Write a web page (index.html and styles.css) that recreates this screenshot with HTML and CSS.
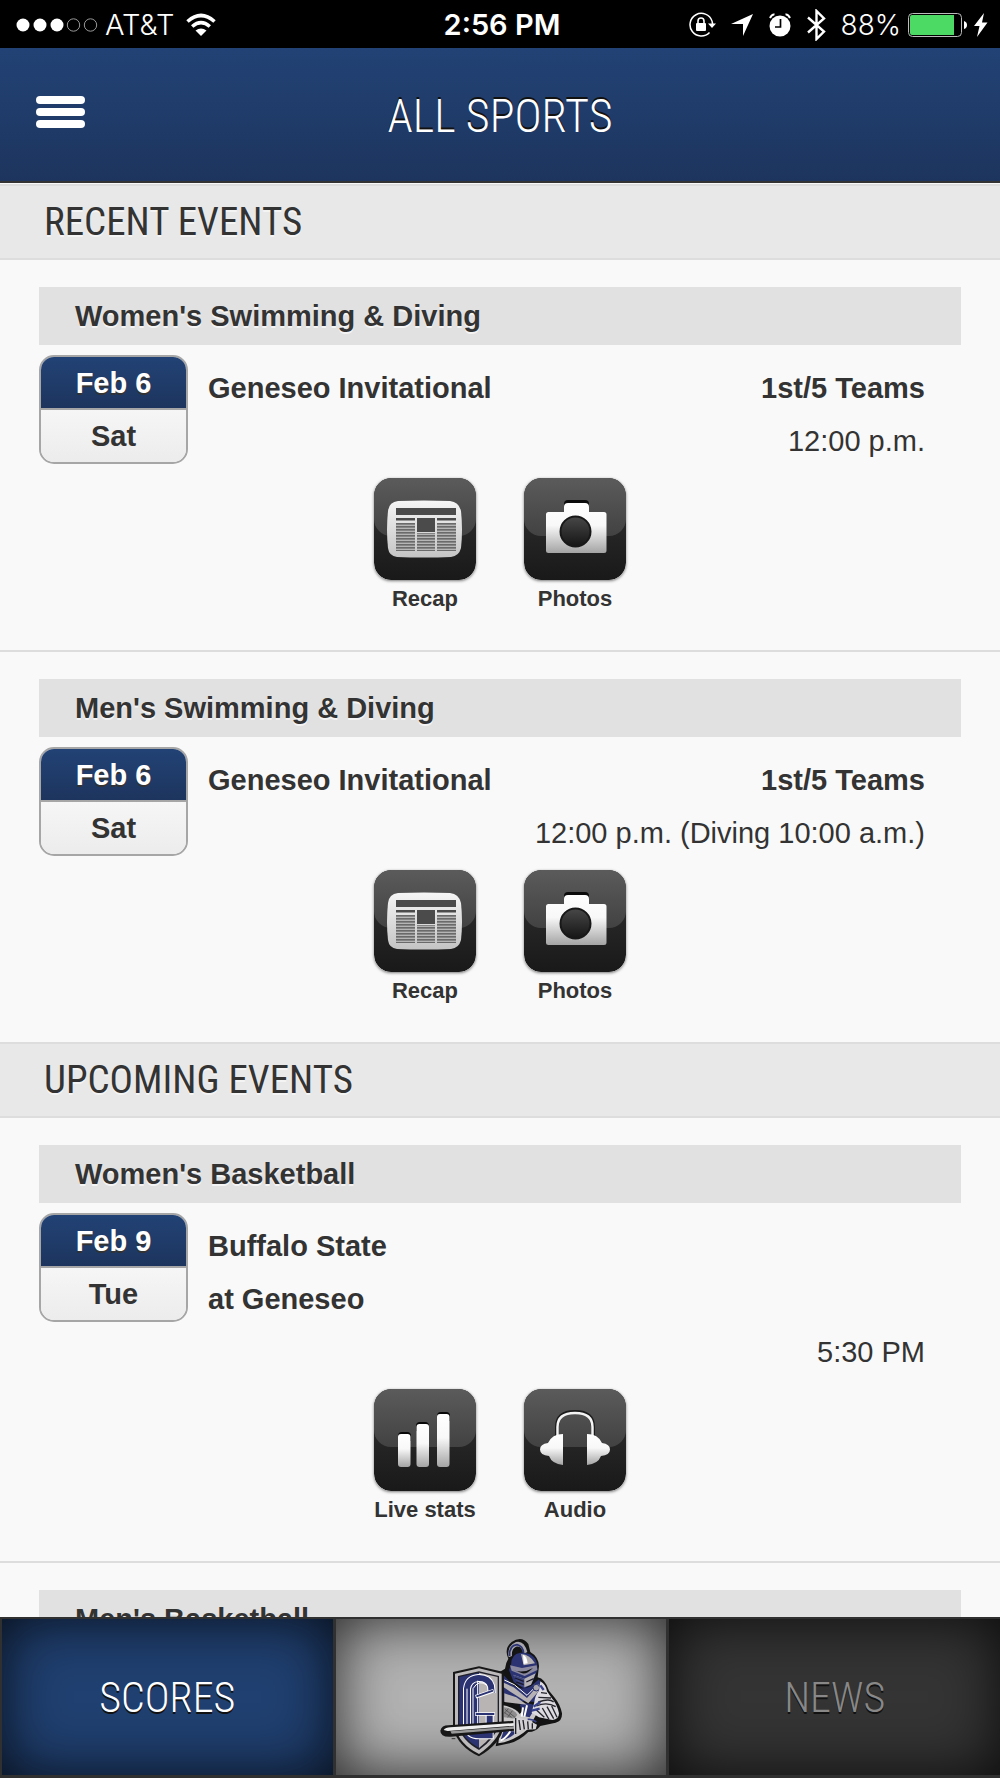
FILE: index.html
```html
<!DOCTYPE html>
<html lang="en">
<head>
<meta charset="utf-8">
<meta name="viewport" content="width=device-width, initial-scale=1">
<title>All Sports</title>
<link rel="stylesheet" href="styles.css">
</head>
<body>
<svg class="defs" width="0" height="0" aria-hidden="true">
  <defs>
    <linearGradient id="tile" x1="0" y1="0" x2="0" y2="1"><stop offset="0" stop-color="#333"/><stop offset="1" stop-color="#191919"/></linearGradient>
    <linearGradient id="gloss" x1="0" y1="0" x2="0" y2="1"><stop offset="0" stop-color="#5b5b5b"/><stop offset="1" stop-color="#424242"/></linearGradient>
    <linearGradient id="metal" x1="0" y1="0" x2="0" y2="1"><stop offset="0" stop-color="#fff"/><stop offset=".45" stop-color="#f8f8f8"/><stop offset="1" stop-color="#a4a4a4"/></linearGradient>
    <linearGradient id="paper" x1="0" y1="0" x2="0" y2="1"><stop offset="0" stop-color="#f6f6f6"/><stop offset="1" stop-color="#c4c4c4"/></linearGradient>
    <linearGradient id="lens" x1="0" y1="0" x2="0" y2="1"><stop offset="0" stop-color="#484848"/><stop offset="1" stop-color="#151515"/></linearGradient>
    <pattern id="lines" width="19" height="3" patternUnits="userSpaceOnUse"><path d="M0 .8h19" stroke="#6a6a6a" stroke-width="1.7"/></pattern>
    <symbol id="tile-base" viewBox="0 0 102 102">
      <rect width="102" height="102" rx="17" fill="url(#tile)"/>
      <path d="M0 17A17 17 0 0 1 17 0h68a17 17 0 0 1 17 17v24a17 17 0 0 1-17 17H17A17 17 0 0 1 0 41z" fill="url(#gloss)"/>
    </symbol>
    <symbol id="recap" viewBox="0 0 102 102">
      <use href="#tile-base"/>
      <path d="M24 23q26-1 52 0 9 1 11 10 2 19 0 37-2 8-10 9-27 1-54 0-8-1-9-9-2-18 0-37 1-9 10-10z" fill="url(#paper)"/>
      <path d="M22 30h60v7H22zM22 40h19v2.500H22zM63 40h19v2.500H63zM43 40h18v14H43z" fill="#4b4b4b"/>
      <path d="M22 45h19v28H22zM63 45h19v28H63zM43 55h18v18H43z" fill="#b5b5b5"/>
      <path d="M22 45h19v28H22zM63 45h19v28H63zM43 55h18v18H43z" fill="url(#lines)"/>
    </symbol>
    <symbol id="photos" viewBox="0 0 102 102">
      <use href="#tile-base"/>
      <path d="M40 26q0-4 4-4h17q4 0 4 4v5H40z" fill="#0b0b0b"/>
      <path d="M40 34v-5q0-4 4-4h17q4 0 4 4v5h15q2.500 0 2.500 2.500v36Q82.500 75 80 75H24.500Q22 75 22 72.500v-36Q22 34 24.500 34z" fill="url(#metal)"/>
      <circle cx="51.500" cy="53.500" r="15" fill="url(#lens)" stroke="#181818" stroke-width="2"/>
    </symbol>
    <symbol id="stats" viewBox="0 0 102 102">
      <use href="#tile-base"/>
      <path d="M24 52v-5q0-4 4-4h5q4 0 4 4v5zM42 42v-5q0-4 4-4h5q4 0 4 4v5zM63 32v-5q0-4 4-4h5q4 0 4 4v5z" fill="#070707"/>
      <rect x="24" y="45" width="12.500" height="33" rx="3" fill="url(#metal)"/>
      <rect x="42.500" y="35" width="12.500" height="43" rx="3" fill="url(#metal)"/>
      <rect x="63" y="25" width="12.500" height="53" rx="3" fill="url(#metal)"/>
    </symbol>
    <symbol id="audio" viewBox="0 0 102 102">
      <use href="#tile-base"/>
      <path d="M33 47V38q0-15 18-15t18 15v9" fill="none" stroke="#1c1c1c" stroke-width="4"/>
      <path d="M33.500 48V38q0-14 17.500-14t17.500 14v10" fill="none" stroke="#f4f4f4" stroke-width="2.500"/>
      <path d="M39 45v31q-11-1-14-9-9-1-9-6.500T24 54q4-9 15-9zM63 45v31q11-1 14-9 9-1 9-6.500T78 54q-4-9-15-9z" fill="url(#metal)"/>
    </symbol>
  </defs>
</svg>

<div class="app">
  <div class="status">
    <div class="status-side">
      <svg width="82" height="16" viewBox="0 0 82 16" aria-hidden="true"><g fill="#fff"><circle cx="7" cy="8" r="6.500"/><circle cx="24" cy="8" r="6.500"/><circle cx="41" cy="8" r="6.500"/></g><g fill="none" stroke="#999" stroke-width="1"><circle cx="57.500" cy="8" r="6.200"/><circle cx="74.500" cy="8" r="6.200"/></g></svg>
      <span class="carrier">AT&amp;T</span>
      <svg class="wifi" width="30" height="24" viewBox="0 0 30 24" aria-hidden="true"><g fill="none" stroke="#fff" stroke-width="3.600"><path d="M1.500 8.500Q15-3.500 28.500 8.500"/><path d="M6.200 13.500q8.800-7.600 17.600 0"/></g><path d="M9.500 17.500q5.500-4 11 0L15 23z" fill="#fff"/></svg>
    </div>
    <span class="clock">2:56 PM</span>
    <div class="status-side status-end">
      <svg width="28" height="26" viewBox="0 0 28 26" aria-hidden="true"><path d="M24 9A11.300 11.300 0 1 0 21.500 20.500" fill="none" stroke="#fff" stroke-width="1.500"/><path d="M20 11.500h8L24 16z" fill="#fff"/><path d="M24 9l.8 4" stroke="#fff" stroke-width="1.500"/><rect x="8" y="11" width="10" height="8" rx="1" fill="#fff"/><path d="M10 11V9a3 3 0 0 1 6 0v2" fill="none" stroke="#fff" stroke-width="1.600"/></svg>
      <svg width="22" height="22" viewBox="0 0 22 22" aria-hidden="true"><path d="M22 0 12 22V10H0z" fill="#fff"/></svg>
      <svg width="24" height="24" viewBox="0 0 24 24" aria-hidden="true"><circle cx="12" cy="13" r="10.500" fill="#fff"/><path d="M2 5q2-4 4.500-3.500M22 5q-2-4-4.500-3.500" fill="none" stroke="#fff" stroke-width="2"/><path d="M12.500 6v8H7" fill="none" stroke="#000" stroke-width="1.700"/></svg>
      <svg width="19" height="32" viewBox="0 0 19 32" aria-hidden="true"><path d="M1 8.500 17 22.500 9.500 30V2L17 9.500 1 23.500" fill="none" stroke="#fff" stroke-width="2.400"/></svg>
      <span class="percent">88%</span>
      <svg width="60" height="24" viewBox="0 0 60 24" aria-hidden="true"><rect x=".5" y=".5" width="53" height="23" rx="4" fill="none" stroke="#bbb"/><path d="M4 2h42v20H4a2 2 0 0 1-2-2V4a2 2 0 0 1 2-2z" fill="#4cd964"/><path d="M56 8q3 1 3 4t-3 4z" fill="#fff"/></svg>
      <svg width="14" height="24" viewBox="0 0 14 24" aria-hidden="true"><path d="M10 0 0 13h5.500L3 24 13.500 9.500H8z" fill="#fff"/></svg>
    </div>
  </div>

  <header class="header">
    <button class="menu" type="button" aria-label="Menu"><span></span><span></span><span></span></button>
    <h1>ALL SPORTS</h1>
  </header>

  <main class="feed">
    <h2>RECENT EVENTS</h2>
    <article class="event">
      <h3>Women's Swimming &amp; Diving</h3>
      <div class="body">
        <div class="date"><span class="day">Feb 6</span><span class="weekday">Sat</span></div>
        <div class="info"><p class="row"><b>Geneseo Invitational</b><b>1st/5 Teams</b></p><p class="time">12:00 p.m.</p></div>
      </div>
      <div class="actions">
        <a href="#"><svg class="tile" viewBox="0 0 102 102"><use href="#recap"/></svg>Recap</a>
        <a href="#"><svg class="tile" viewBox="0 0 102 102"><use href="#photos"/></svg>Photos</a>
      </div>
    </article>
    <article class="event last">
      <h3>Men's Swimming &amp; Diving</h3>
      <div class="body">
        <div class="date"><span class="day">Feb 6</span><span class="weekday">Sat</span></div>
        <div class="info"><p class="row"><b>Geneseo Invitational</b><b>1st/5 Teams</b></p><p class="time">12:00 p.m. (Diving 10:00 a.m.)</p></div>
      </div>
      <div class="actions">
        <a href="#"><svg class="tile" viewBox="0 0 102 102"><use href="#recap"/></svg>Recap</a>
        <a href="#"><svg class="tile" viewBox="0 0 102 102"><use href="#photos"/></svg>Photos</a>
      </div>
    </article>

    <h2>UPCOMING EVENTS</h2>
    <article class="event">
      <h3>Women's Basketball</h3>
      <div class="body">
        <div class="date"><span class="day">Feb 9</span><span class="weekday">Tue</span></div>
        <div class="info"><p class="row"><b>Buffalo State</b></p><p class="row"><b>at Geneseo</b></p><p class="time">5:30 PM</p></div>
      </div>
      <div class="actions">
        <a href="#"><svg class="tile" viewBox="0 0 102 102"><use href="#stats"/></svg>Live stats</a>
        <a href="#"><svg class="tile" viewBox="0 0 102 102"><use href="#audio"/></svg>Audio</a>
      </div>
    </article>
    <article class="event">
      <h3>Men's Basketball</h3>
    </article>
  </main>

  <nav class="tabs">
    <a class="tab scores" href="#">SCORES</a>
    <a class="tab home" href="#" aria-label="Home">
      <svg width="124" height="119" viewBox="58 38 372 357" aria-hidden="true">
        <!-- torso and arm silhouette -->
        <path d="M256 130Q258 112 266 100 252 70 276 50 306 30 326 56L332 80Q356 94 358 122L354 156Q376 160 388 196L404 216Q422 238 427 264 428 288 408 292L362 302Q348 320 326 320 300 346 270 354L228 363 240 300V140z" fill="#141414"/>
        <path d="M250 240q40 8 50 26l30-30 24 24-28 50q-40 36-90 44z" fill="#c9c7c8"/>
        <path d="M252 316q20 4 40 0-14 22-50 30zM300 238q22-10 50 4l-20 34-20-4q0-16-10-34z" fill="#2b3372"/>
        <path d="M310 246l-4 28M322 240l-8 34M272 318q-14 22-30 28" stroke="#fff" stroke-width="6" fill="none"/>
        <path d="M253 246q26 2 40 22l-8 12-32-4z" fill="#8e8c8d"/>
        <path d="M256 252l30 24M254 262l22 14M266 250l-12 14M278 256l-14 20" stroke="#444" stroke-width="2"/>
        <!-- breastplate -->
        <path d="M252 150l28 30q24 18 54 2l24-20 10 22-18 46q-50-4-98-2z" fill="#2b3372"/>
        <path d="M252 172l30 14 40 32 28-32 10 8-34 40-74-48zM254 204l36 12 32 22-68-8z" fill="#b7b2b3"/>
        <path d="M254 164l30 14 38 32 34-34" stroke="#fff" stroke-width="3" fill="none"/>
        <circle cx="350" cy="187" r="10" fill="#aaa7ad" stroke="#222b66" stroke-width="3"/>
        <!-- sleeve -->
        <path d="M362 168q16 8 20 30l14 20q16 18 22 46 0 18-20 20l-40-8-22-14 8-32q2-20 14-34z" fill="#dddbe0"/>
        <path d="M364 202l18 2M356 216l38 2M356 230q34-12 46 0M350 242q32-14 58 2M368 248l20 34M382 244l20 36M396 242l16 34M348 252l26 24" stroke="#25252c" stroke-width="4" fill="none"/>
        <path d="M342 244l20-14M336 256l24-6M362 180l10 14" stroke="#39428c" stroke-width="7"/>
        <!-- plume and helmet -->
        <path d="M267 96q-6-34 22-46 24-6 34 30l-12 6q-4-26-22-22-14 6-12 28z" fill="#a9a7ad"/>
        <path d="M270 92q-2-32 22-34 18 4 20 26" fill="none" stroke="#2b3372" stroke-width="5"/>
        <path d="M283 92q0-18 10-20 8 2 10 16z" fill="#161616"/>
        <path d="M274 118q0-32 28-36 42-2 50 32l2 18-18 44-22 14-32-20-14-36z" fill="#2b3372"/>
        <path d="M304 86q28 2 42 28l-34 6q-4-16-8-34z" fill="#b7b2b3"/><path d="M310 88q12 4 14 26l-12 2z" fill="#fff"/>
        <path d="M271 120l36 8 44-8 2 14-38 18-39-16z" fill="#8b89a0"/>
        <path d="M280 134q30 12 60-6-20 20-32 16z" fill="#111"/>
        <path d="M280 148l34 12 34-16-14 34-20 8z" fill="#b7b2b3"/>
        <path d="M280 148l34 12v26l-18-8z" fill="#3e467f"/><path d="M286 158l26 10M290 170l22 8M320 170l22-10" stroke="#1a1a2c" stroke-width="4"/>
        <!-- shield -->
        <path d="M100 140l78-17 74 17v164q-8 50-74 89-64-30-78-86z" fill="#171717"/>
        <path d="M106 145l72-16 68 16v156q-10 44-68 85-60-30-72-82z" fill="#bdbabb"/>
        <path d="M115 152l63-14 60 14v146q-10 40-60 76-52-28-63-74z" fill="#20202a"/>
        <path d="M119 155l59-13v226q-50-28-59-68z" fill="#2b3372"/>
        <path d="M178 142l56 13v142q-10 36-56 71z" fill="#b9b4b4"/>
        <!-- monogram ribbon -->
        <g fill="none">
          <path d="M216 204l-2-22q-8-25-38-24-30 2-34 32v108q4 32 36 32h32V268" stroke="#fff" stroke-width="24"/>
          <path d="M216 204l-2-22q-8-25-38-24-30 2-34 32v108q4 32 36 32h32V268" stroke="#2b3372" stroke-width="18"/>
          <path d="M202 180q-24-20-42 10v110q6 22 28 22" stroke="#fff" stroke-width="3"/>
          <path d="M142 190v108M174 166v156" stroke="#fff" stroke-width="3"/>
          <path d="M168 214l54-18M166 266h60" stroke="#fff" stroke-width="11"/>
          <path d="M170 213l50-17M168 266h56" stroke="#2b3372" stroke-width="6"/>
        </g>
        <!-- sword -->
        <path d="M62 316q4-16 24-16l200-14v30L94 334q-32 2-32-18z" fill="#171717"/>
        <path d="M72 314q6-8 20-8l194-13v8L84 317z" fill="#eee"/><path d="M92 318l194-15v7L96 325z" fill="#999"/>
        <path d="M280 280q24-6 50 6l22 12-4 14-44 2-20 12z" fill="#d3d1d4"/>
        <path d="M288 278v48M298 284l4 30M310 284l4 28M324 288l2 24M338 294v16" stroke="#202027" stroke-width="4"/>
        <path d="M324 282q14-2 26 8" stroke="#39428c" stroke-width="5" fill="none"/>
        <path d="M96 340h11" stroke="#333" stroke-width="3"/>
      </svg>
    </a>
    <a class="tab news" href="#">NEWS</a>
  </nav>
</div>
</body>
</html>
```
FILE: styles.css
```css
* { box-sizing: border-box; }
body {
  margin: 0;
  background: #f9f9f9;
  color: #333;
  font-family: "Liberation Sans", Arial, sans-serif;
}
h1, h2, h3, p { margin: 0; }
a { color: inherit; text-decoration: none; }
svg { display: block; flex: none; }
.defs { position: absolute; }

.app { display: flex; flex-direction: column; height: 100vh; }

/* Phone status bar */
.status {
  display: grid;
  grid-template-columns: 1fr auto 1fr;
  align-items: center;
  flex: none;
  height: 48px;
  padding: 0 12px 0 16px;
  background: #000;
  color: #fff;
  font-family: Inter, "Liberation Sans", sans-serif;
  font-size: 29px;
  line-height: 50px;
}
.status-side { display: flex; align-items: center; gap: 7px; }
.carrier { font-weight: 300; }
.wifi { margin-left: 5px; }
.clock { font-weight: 600; }
.status-end { justify-content: flex-end; gap: 15px; }
.percent { margin-right: -8px; font-size: 28px; font-weight: 300; }
.status-end svg:last-child { margin-left: -9px; }

/* Title bar */
.header {
  display: grid;
  grid-template-columns: 1fr auto 1fr;
  align-items: center;
  flex: none;
  height: 135px;
  padding: 0 36px;
  border-bottom: 2px solid #333;
  background: linear-gradient(#224275, #1d355e);
}
.menu {
  display: grid;
  gap: 4px;
  width: 49px;
  margin: 0 0 6px;
  padding: 0;
  border: 0;
  background: none;
}
.menu span { height: 8px; border-radius: 4px; background: #fff; }
h1, h2, .tab {
  font-family: "Roboto Condensed", "Liberation Sans Narrow", "DejaVu Sans Condensed", sans-serif;
  font-weight: 300;
}
h1 { padding-top: 3px; color: #fff; font-size: 46px; line-height: 56px; text-shadow: 0 -2px 0 #111; }

/* Event feed */
.feed { flex: 1; min-height: 0; padding-top: 1px; overflow-y: auto; scrollbar-width: none; }
h2 {
  height: 76px;
  padding: 0 44px;
  border: solid #ddd;
  border-width: 2px 0;
  background: #e8e8e8;
  font-size: 39px;
  font-weight: 400;
  line-height: 72px;
  text-shadow: 0 2px 0 #f4f4f4;
}
.event { padding: 27px 39px 39px; border-bottom: 2px solid #ddd; }
.event.last { border-bottom: 0; }
h3 {
  padding: 0 36px;
  background: #e1e1e1;
  font-size: 29px;
  line-height: 58px;
  text-shadow: 0 2px 0 #f4f4f4;
}
.body { display: flex; gap: 20px; padding: 10px 36px 10px 0; font-size: 29px; }
.date {
  display: grid;
  grid-template-rows: 51px 54px;
  flex: none;
  width: 149px;
  height: 109px;
  overflow: hidden;
  border: 2px solid #a6a6a6;
  border-radius: 15px;
  font-weight: 700;
  line-height: 53px;
  text-align: center;
}
.day { background: linear-gradient(#224275, #1d355e); color: #fff; text-shadow: 0 2px 0 #333; }
.weekday { border-top: 2px solid #a6a6a6; background: linear-gradient(#f6f6f6, #ececec); }
.info { flex: 1; padding-top: 7px; line-height: 53px; }
.row { display: flex; justify-content: space-between; }
.time { text-align: right; }
.actions { display: flex; justify-content: center; gap: 48px; }
.actions a {
  display: grid;
  gap: 6px;
  justify-items: center;
  width: 102px;
  font-size: 22px;
  font-weight: 700;
  line-height: 25px;
  white-space: nowrap;
}
.tile { width: 102px; height: 102px; border-radius: 17px; box-shadow: 0 1px 3px #777; }

/* Bottom tabs */
.tabs {
  display: grid;
  grid-template-columns: repeat(3, 1fr);
  gap: 3px;
  flex: none;
  height: 161px;
  padding: 2px 0 3px 2px;
  background: #303030;
}
.tab {
  display: flex;
  align-items: center;
  justify-content: center;
  box-shadow: inset 0 0 60px rgba(0, 0, 0, .8);
  font-size: 42px;
  text-shadow: 0 2px 0 #111;
}
.scores { background: #204071; color: #fff; }
.home { background: #b2b2b2; }
.news { background: #343434; color: #888; }
```
